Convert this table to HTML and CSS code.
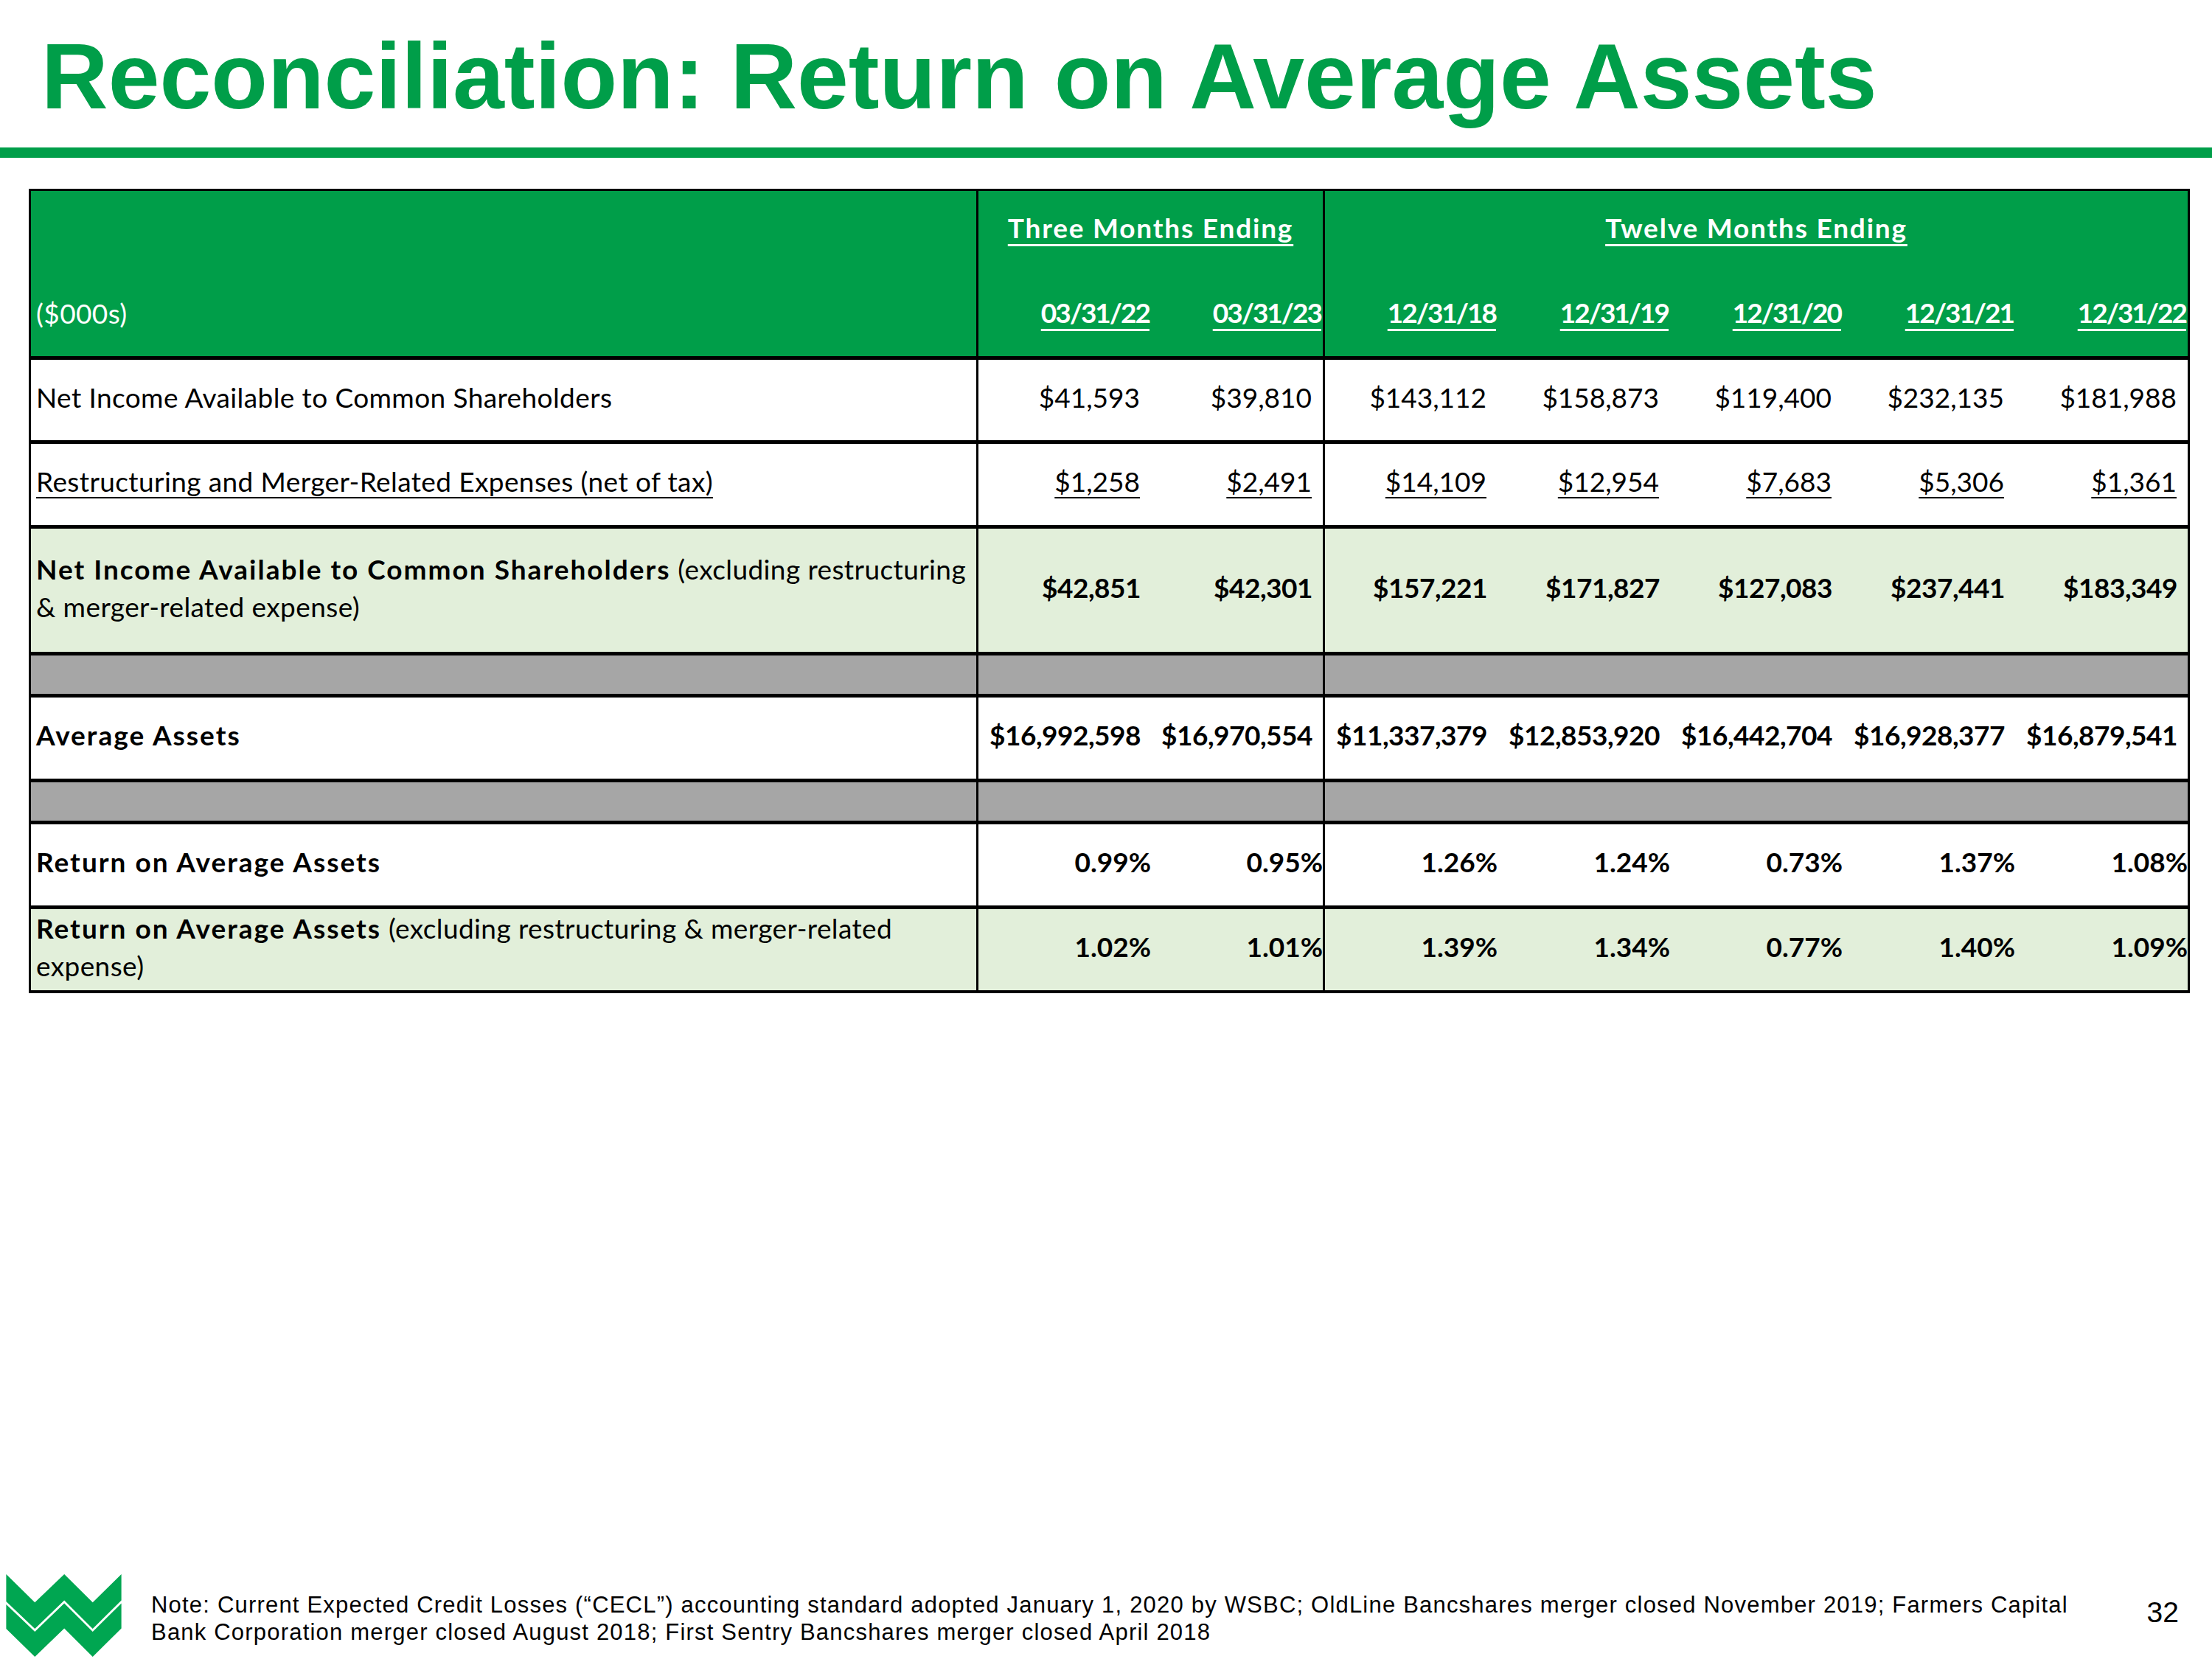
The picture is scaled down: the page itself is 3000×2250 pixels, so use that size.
FILE: index.html
```html
<!DOCTYPE html>
<html lang="en">
<head>
<meta charset="utf-8">
<title>Reconciliation: Return on Average Assets</title>
<link rel="stylesheet" href="styles.css">
</head>
<body>
<div class="page">
  <h1 class="title">Reconciliation: Return on Average Assets</h1>
  <div class="rule"></div>

  <div class="tbl">
    <div class="c hd hd-lbl lbl">($000s)</div>
    <div class="c hd grp g1"><span class="u">Three Months Ending</span></div>
    <div class="c hd grp g2"><span class="u">Twelve Months Ending</span></div>

    <div class="c hd date"><span class="u">03/31/22</span></div>
    <div class="c hd date gend"><span class="u">03/31/23</span></div>
    <div class="c hd date"><span class="u">12/31/18</span></div>
    <div class="c hd date"><span class="u">12/31/19</span></div>
    <div class="c hd date"><span class="u">12/31/20</span></div>
    <div class="c hd date"><span class="u">12/31/21</span></div>
    <div class="c hd date"><span class="u">12/31/22</span></div>

    <div class="c lbl">Net Income Available to Common Shareholders</div>
    <div class="c num">$41,593</div>
    <div class="c num gend">$39,810</div>
    <div class="c num">$143,112</div>
    <div class="c num">$158,873</div>
    <div class="c num">$119,400</div>
    <div class="c num">$232,135</div>
    <div class="c num">$181,988</div>

    <div class="c lbl"><span class="ul">Restructuring and Merger-Related Expenses (net of tax)</span></div>
    <div class="c num"><span class="ul">$1,258</span></div>
    <div class="c num gend"><span class="ul">$2,491</span></div>
    <div class="c num"><span class="ul">$14,109</span></div>
    <div class="c num"><span class="ul">$12,954</span></div>
    <div class="c num"><span class="ul">$7,683</span></div>
    <div class="c num"><span class="ul">$5,306</span></div>
    <div class="c num"><span class="ul">$1,361</span></div>

    <div class="c lbl tint two"><span><b>Net Income Available to Common Shareholders</b> (excluding restructuring<br>&amp; merger-related expense)</span></div>
    <div class="c num tint bold">$42,851</div>
    <div class="c num tint bold gend">$42,301</div>
    <div class="c num tint bold">$157,221</div>
    <div class="c num tint bold">$171,827</div>
    <div class="c num tint bold">$127,083</div>
    <div class="c num tint bold">$237,441</div>
    <div class="c num tint bold">$183,349</div>

    <div class="c lbl gray"></div>
    <div class="c gray"></div>
    <div class="c gray gend"></div>
    <div class="c gray"></div>
    <div class="c gray"></div>
    <div class="c gray"></div>
    <div class="c gray"></div>
    <div class="c gray"></div>

    <div class="c lbl bold">Average Assets</div>
    <div class="c num bold">$16,992,598</div>
    <div class="c num bold gend">$16,970,554</div>
    <div class="c num bold">$11,337,379</div>
    <div class="c num bold">$12,853,920</div>
    <div class="c num bold">$16,442,704</div>
    <div class="c num bold">$16,928,377</div>
    <div class="c num bold">$16,879,541</div>

    <div class="c lbl gray"></div>
    <div class="c gray"></div>
    <div class="c gray gend"></div>
    <div class="c gray"></div>
    <div class="c gray"></div>
    <div class="c gray"></div>
    <div class="c gray"></div>
    <div class="c gray"></div>

    <div class="c lbl bold">Return on Average Assets</div>
    <div class="c pct bold">0.99%</div>
    <div class="c pct bold gend">0.95%</div>
    <div class="c pct bold">1.26%</div>
    <div class="c pct bold">1.24%</div>
    <div class="c pct bold">0.73%</div>
    <div class="c pct bold">1.37%</div>
    <div class="c pct bold">1.08%</div>

    <div class="c lbl tint two last"><span><b>Return on Average Assets</b> (excluding restructuring &amp; merger-related<br>expense)</span></div>
    <div class="c pct tint bold last">1.02%</div>
    <div class="c pct tint bold gend last">1.01%</div>
    <div class="c pct tint bold last">1.39%</div>
    <div class="c pct tint bold last">1.34%</div>
    <div class="c pct tint bold last">0.77%</div>
    <div class="c pct tint bold last">1.40%</div>
    <div class="c pct tint bold last">1.09%</div>
  </div>

  <footer class="footer">
    <svg class="logo" viewBox="25 45 470 340" width="157" height="113" aria-hidden="true">
      <polygon points="25,45 142,160 262,45 378,160 495,45 495,152 378,268 262,152 142,268 25,156" fill="#00a651"/>
      <polygon points="25,168 142,280 262,164 378,280 495,164 495,266 378,382 262,266 142,382 25,268" fill="#00a651"/>
    </svg>
    <p class="note">Note: Current Expected Credit Losses (“CECL”) accounting standard adopted January 1, 2020 by WSBC; OldLine Bancshares merger closed November 2019; Farmers Capital<br>Bank Corporation merger closed August 2018; First Sentry Bancshares merger closed April 2018</p>
    <div class="pagenum">32</div>
  </footer>
</div>
</body>
</html>
```

FILE: styles.css
```css
html, body {
  margin: 0;
  padding: 0;
  background: #ffffff;
}

.page {
  width: 3000px;
  height: 2250px;
  display: flex;
  flex-direction: column;
  background: #ffffff;
}

.title {
  margin: 0;
  padding: 42px 0 0 56px;
  font-family: "Liberation Sans", Arial, sans-serif;
  font-weight: bold;
  font-size: 125.5px;
  line-height: 124px;
  color: #009e49;
  white-space: nowrap;
}

.rule {
  margin-top: 34px;
  height: 14px;
  background: #009e49;
}

/* ---------- table ---------- */
.tbl {
  margin: 42px 0 0 39px;
  width: 2931px;
  box-sizing: border-box;
  border: 3px solid #000;
  border-bottom-width: 4px;
  display: grid;
  grid-template-columns: 1285px 234px 236px 234px 234px 234px 234px 234px;
  grid-template-rows: 111px 118px 114px 115px 172px 57px 115px 57px 115px 110px;
  font-family: Lato, "Open Sans", sans-serif;
  font-size: 37px;
  line-height: 44px;
  color: #000;
}

.c {
  box-sizing: border-box;
  display: flex;
  align-items: center;
  justify-content: flex-end;
  border-bottom: 5px solid #000;
  padding-bottom: 8px;
  white-space: nowrap;
  min-width: 0;
}

.c.last { border-bottom: none; }

.lbl {
  justify-content: flex-start;
  padding-left: 7px;
  border-right: 3px solid #000;
  letter-spacing: 0.4px;
}

.lbl.bold,
.lbl b {
  font-weight: bold;
  letter-spacing: 2px;
}

.gend { border-right: 3px solid #000; }

.num { padding-right: 15px; }
.num.bold { letter-spacing: -0.5px; padding-right: 14px; }
.pct { padding-right: 0; }

.bold { font-weight: bold; }

.tint { background: #e2efda; }
.gray { background: #a6a6a6; }

.two { line-height: 51px; }

.ul {
  text-decoration: underline;
  text-decoration-thickness: 2px;
  text-underline-offset: 7px;
}

/* header */
.hd {
  background: #009e49;
  color: #ffffff;
}

.hd-lbl {
  grid-row: 1 / 3;
  align-items: flex-end;
  padding-bottom: 36px;
}

.grp {
  border-bottom: none;
  padding-bottom: 0;
  justify-content: center;
  align-items: flex-start;
  padding-top: 28px;
  font-weight: bold;
  letter-spacing: 1.8px;
}

.g1 { grid-column: 2 / 4; border-right: 3px solid #000; }
.g2 { grid-column: 4 / 9; }

.date {
  font-weight: bold;
  letter-spacing: -2px;
  padding-right: 2px;
  padding-bottom: 6px;
}

.u {
  text-decoration: underline;
  text-decoration-thickness: 3px;
  text-underline-offset: 8px;
}

/* ---------- footer ---------- */
.footer {
  margin-top: auto;
  height: 117px;
  display: flex;
  align-items: flex-start;
}

.logo {
  display: block;
  margin: 2px 0 0 8px;
  flex: none;
}

.note {
  margin: 25px 0 0 40px;
  font-family: "Liberation Sans", Arial, sans-serif;
  font-size: 31px;
  line-height: 37px;
  letter-spacing: 1.2px;
  color: #000;
  white-space: nowrap;
}

.pagenum {
  margin: 34px 45px 0 auto;
  font-family: "Liberation Sans", Arial, sans-serif;
  font-size: 39px;
  line-height: 39px;
  color: #000;
}
```
